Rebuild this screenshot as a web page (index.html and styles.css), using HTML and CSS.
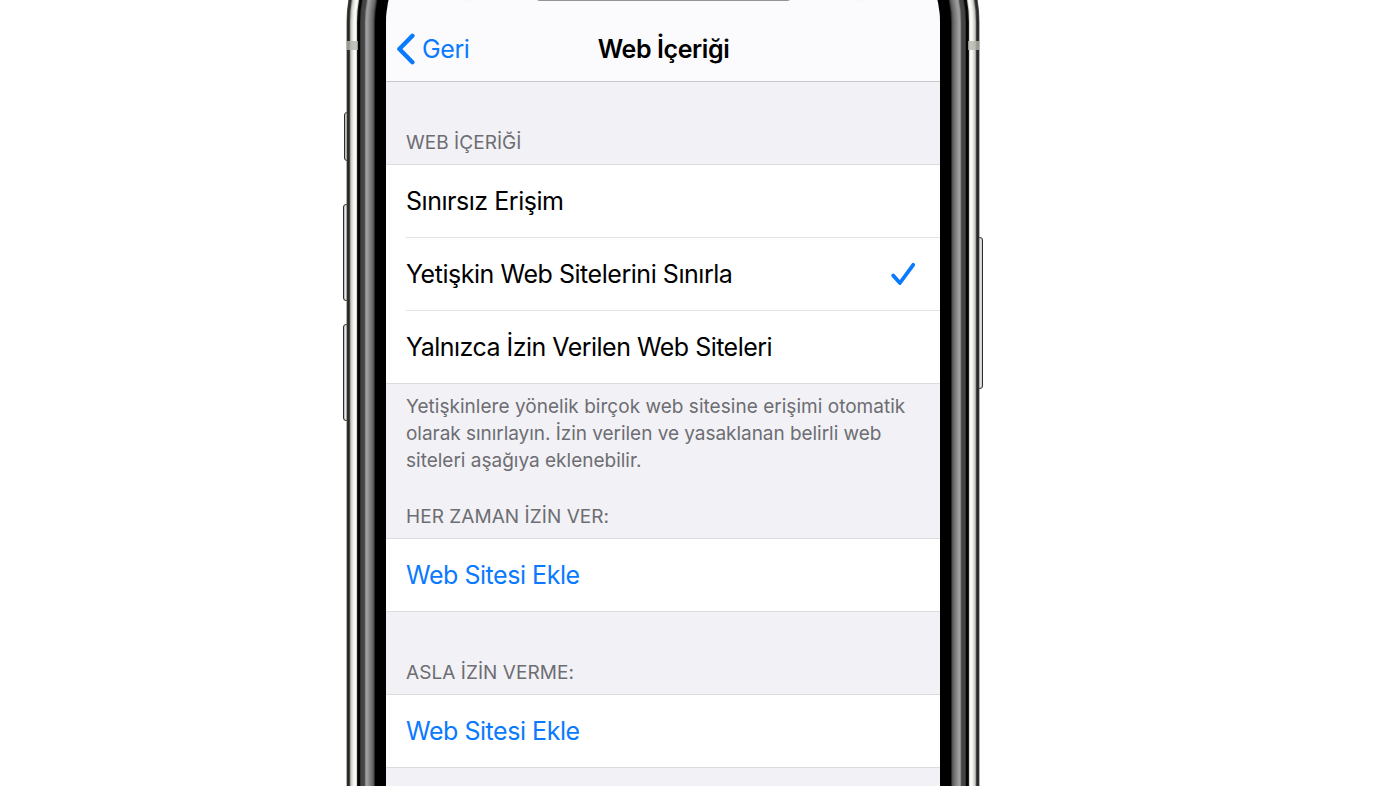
FILE: index.html
```html
<!DOCTYPE html>
<html lang="tr">
<head>
  <meta charset="UTF-8">
  <meta name="viewport" content="width=device-width, initial-scale=1.0">
  <title>Web İçeriği</title>
  <link rel="stylesheet" href="styles.css">
</head>
<body>
  <div class="phone">
    <div class="key silent"></div>
    <div class="key volume-up"></div>
    <div class="key volume-down"></div>
    <div class="key power"></div>
    <div class="antenna left"></div>
    <div class="antenna right"></div>

    <div class="screen">
      <div class="notch"></div>
      <header class="navbar">
        <a class="back">
          <svg width="19" height="32" viewBox="0 0 19 32"><path d="M16.4 2.8 3.4 16l13 13.2"/></svg>
          <span>Geri</span>
        </a>
        <h1>Web İçeriği</h1>
      </header>

      <h2>WEB İÇERİĞİ</h2>
      <ul>
        <li><span>Sınırsız Erişim</span></li>
        <li>
          <span>Yetişkin Web Sitelerini Sınırla</span>
          <svg class="check" width="26" height="26" viewBox="0 0 26 26"><path d="M3.2 14.4 9.9 22 23.2 3.8"/></svg>
        </li>
        <li class="only"><span>Yalnızca İzin Verilen Web Siteleri</span></li>
      </ul>
      <p>
        <span class="wide">Yetişkinlere yönelik birçok web sitesine erişimi otomatik</span><br>
        <span class="narrow">olarak sınırlayın. İzin verilen ve yasaklanan belirli web</span><br>
        siteleri aşağıya eklenebilir.
      </p>

      <h2 class="allow">HER ZAMAN İZİN VER:</h2>
      <ul>
        <li class="add"><span>Web Sitesi Ekle</span></li>
      </ul>

      <h2>ASLA İZİN VERME:</h2>
      <ul>
        <li class="add"><span>Web Sitesi Ekle</span></li>
      </ul>
    </div>
  </div>
</body>
</html>
```

FILE: styles.css
```css
* {
  box-sizing: border-box;
}
body {
  margin: 0;
  height: 786px;
  overflow: hidden;
  background: #fff;
  color: #000;
  font-family: Inter, "Liberation Sans", sans-serif;
}
.phone {
  position: relative;
  display: flow-root;
  width: 554px;
  margin-left: 386px;
}
/* the rings of the metal frame, from the glass outwards */
.screen {
  position: relative;
  height: 860px;
  margin-top: -74px;
  overflow: hidden;
  border-top: 74px solid #fbfbfd;
  border-radius: 96px 96px 0 0;
  background: #f1f1f6;
  box-shadow:
    0 0 0 11px #000,
    0 0 0 12px #2c2c2c,
    0 0 0 13px #555,
    0 0 0 14px #656565,
    0 0 0 15px #727272,
    0 0 0 16px #7c7c7c,
    0 0 0 17px #858585,
    0 0 0 18px #919191,
    0 0 0 19px #9b9b9b,
    0 0 0 20px #a0a0a0,
    0 0 0 21px #888,
    0 0 0 22px #505050,
    0 0 0 25px #444,
    0 0 0 26px #333,
    0 0 0 28px #050505,
    0 0 0 29px #1c1c1a,
    0 0 0 30px #d6d6d2,
    0 0 0 32px #fafaf8,
    0 0 0 33px #f1f1ec,
    0 0 0 34px #e2e2dc,
    0 0 0 35px #d2d2cb,
    0 0 0 36px #aaaaa3,
    0 0 0 37px #434441,
    0 0 0 38px #282926,
    0 0 0 39px #30312e,
    0 0 0 39.5px #666;
}
.notch {
  position: absolute;
  z-index: 1;
  top: -4px;
  left: 149px;
  width: 257px;
  height: 5px;
  border-radius: 0 0 8px 8px;
  background: #949497;
}
.navbar {
  position: relative;
  display: flex;
  align-items: center;
  justify-content: center;
  height: 82px;
  padding-top: 17px;
  border-bottom: 1px solid #c8c8cb;
  background: #fbfbfd;
}
svg {
  fill: none;
  stroke: #0a7aff;
  stroke-width: 4.4;
  stroke-linecap: round;
  stroke-linejoin: round;
}
.back {
  position: absolute;
  left: 10px;
  display: flex;
  align-items: center;
  gap: 7px;
  color: #0a7aff;
  font-size: 25px;
  letter-spacing: -0.4px;
}
h1 {
  margin: 0;
  padding-left: 1px;
  font-size: 25px;
  font-weight: 600;
  letter-spacing: -0.4px;
}
h2 {
  display: flex;
  align-items: flex-end;
  height: 82px;
  margin: 0;
  padding: 0 20px 9px;
  color: #6d6d72;
  font-size: 19px;
  font-weight: 400;
  line-height: 24px;
  letter-spacing: 0.05px;
}
ul {
  margin: 0;
  padding: 0;
  list-style: none;
  border-top: 1px solid #dcdcdf;
  border-bottom: 1px solid #dcdcdf;
  background: #fff;
}
li {
  display: flex;
  align-items: center;
  justify-content: space-between;
  height: 72px;
  margin-left: 20px;
  padding-right: 24px;
  font-size: 25px;
  letter-spacing: -0.46px;
  white-space: nowrap;
}
li + li {
  height: 73px;
  border-top: 1px solid #e4e4e6;
}
.only {
  letter-spacing: -0.52px;
}
.add {
  color: #0a7aff;
}
.check {
  stroke-width: 3.8;
}
p {
  margin: 0;
  padding: 10px 20px 0;
  color: #6d6d72;
  font-size: 19px;
  line-height: 26.9px;
  white-space: nowrap;
}
.wide {
  letter-spacing: 0.03px;
}
.narrow {
  letter-spacing: -0.04px;
}
h2.allow {
  height: 64px;
  margin-top: -0.6px;
}
/* buttons on the sides of the case */
.key {
  position: absolute;
  width: 6px;
  border: 1.5px solid #2c2d2a;
  border-radius: 3px;
  background: linear-gradient(90deg, #aaa, #eee 40%, #ccc);
}
.silent {
  top: 112px;
  left: -42px;
  height: 49px;
}
.volume-up {
  top: 204px;
  left: -43px;
  height: 97px;
}
.volume-down {
  top: 324px;
  left: -43px;
  height: 97px;
}
.power {
  top: 237px;
  right: -43px;
  height: 152px;
}
.antenna {
  position: absolute;
  z-index: 1;
  top: 41px;
  width: 12px;
  height: 9px;
  background: rgba(180, 183, 172, 0.8);
}
.left {
  left: -40px;
}
.right {
  right: -40px;
}
```
